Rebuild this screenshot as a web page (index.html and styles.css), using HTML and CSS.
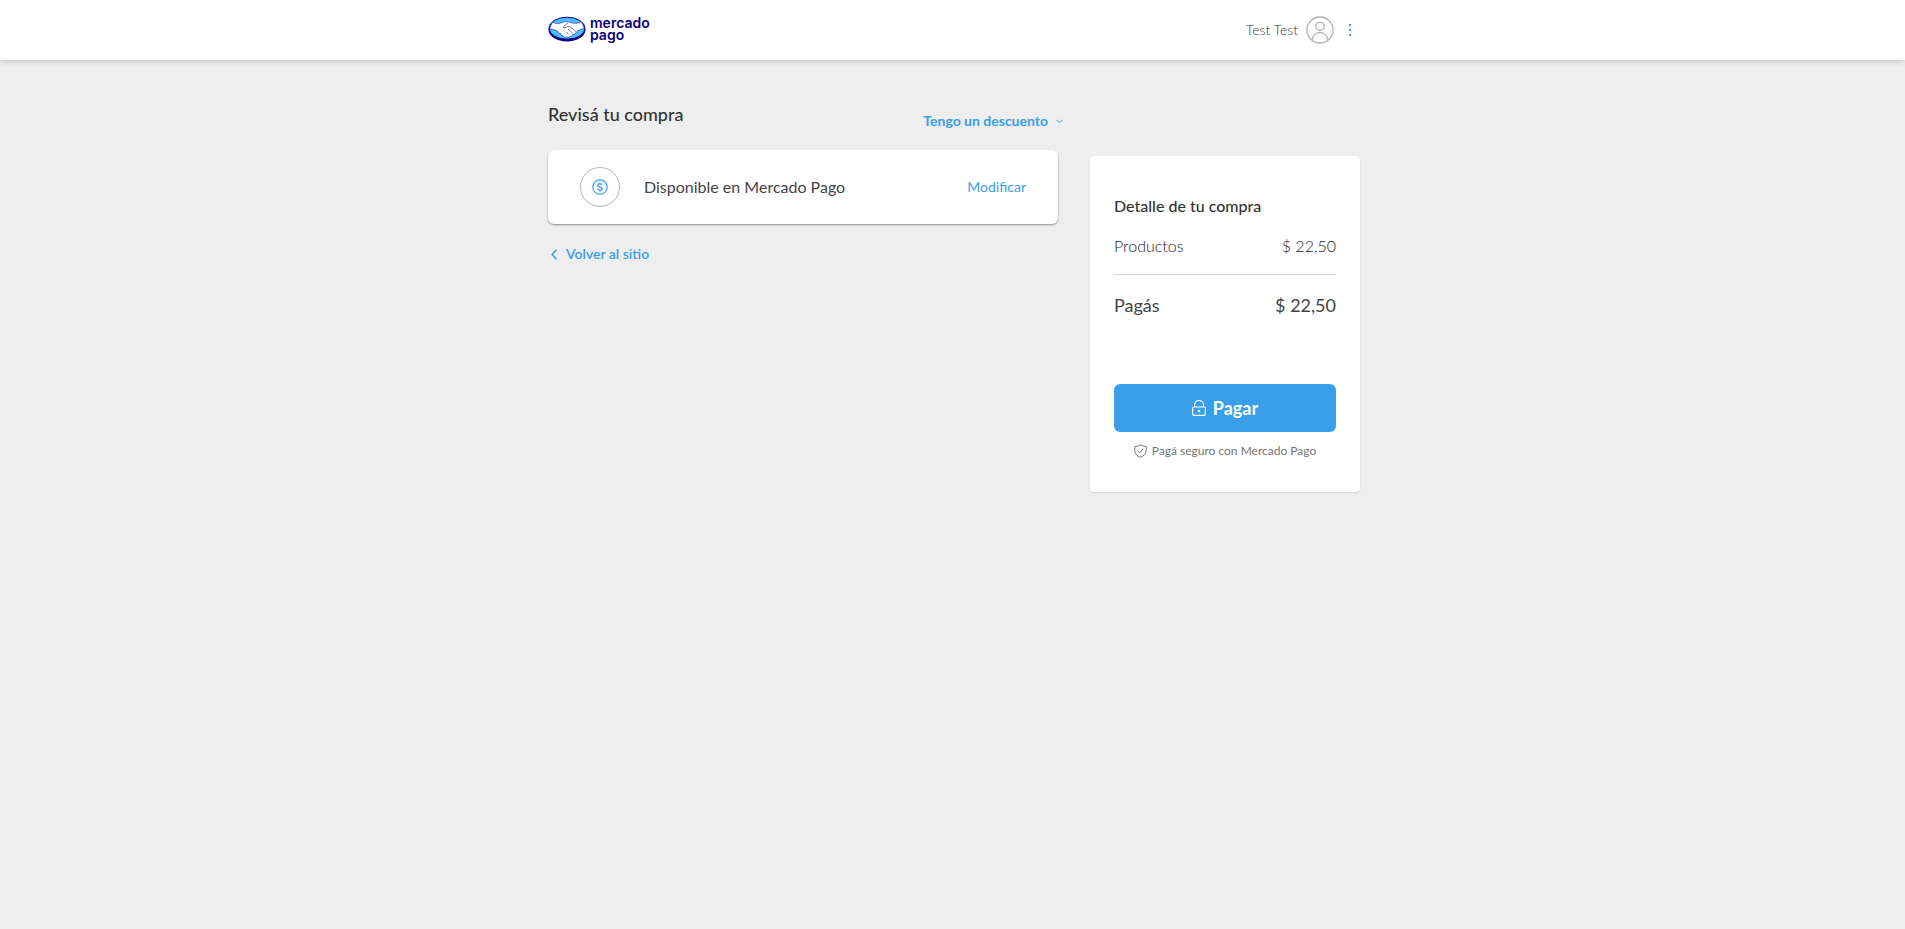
FILE: index.html
```html
<!DOCTYPE html>
<html lang="es">
<head>
<meta charset="utf-8">
<title>Revisá tu compra</title>
<link rel="stylesheet" href="styles.css">
</head>
<body>
<header class="header">
  <div class="container header-inner">
    <a class="logo" href="#" aria-label="mercado pago">
      <svg class="logo-mark" width="38" height="26" viewBox="0 0 38 26" aria-hidden="true">
        <ellipse cx="19" cy="13.8" rx="18.5" ry="11.7" fill="#0a0080"/>
        <ellipse cx="19" cy="12.2" rx="18" ry="11" fill="#4dbdff" stroke="#0a0080"/>
        <path d="M4.500 6c3.500 2 6.500 2 9.500.6 2.500-1.200 4.500-1 6.500-.6 4.500 1.600 9 2 13-.2l2.800 6.600c-3.500.6-6.500 2-8.500 4.200-.6 1.700-2 2-3 1.800-.6 1.700-2 2.200-3 1.800-1 1.600-2.400 1.500-3.400.6-1.300 1.100-2.900.3-3.200-1.100-2.200.2-3-1.200-2.600-2.400-2 .2-3.200-.8-3-2.200-2.700-1.100-5.100-1.900-8-2.300z" fill="#fff" stroke="#0a0080" stroke-width=".5"/>
        <path d="M20 7.500c-2.200.2-3.500 2.200-5 3.700.8 1.200 2.800.8 4.600-1 2.600 0 6.200 3 8.500 5.500M20 13.200l4.500 4M17.800 15.500l3 3" fill="none" stroke="#0a0080" stroke-width=".5"/>
      </svg>
      <span class="logo-text">mercado<br>pago</span>
    </a>
    <div class="user">
      <span class="user-name">Test Test</span>
      <svg class="avatar" width="28" height="28" viewBox="0 0 28 28" fill="none" stroke="#b3b3b3" stroke-width="1.300" aria-hidden="true">
        <circle cx="14" cy="14" r="13"/><circle cx="14" cy="10.300" r="4.200"/>
        <path d="M6.300 24.300v-.6c0-4.200 3.300-7 7.700-7s7.700 2.800 7.700 7v.6"/>
      </svg>
      <button class="menu" type="button" aria-label="Más opciones">
        <svg width="2" height="12" viewBox="0 0 2 12" fill="#389fe8" aria-hidden="true"><path d="M0 0h2v2H0zM0 5h2v2H0zM0 10h2v2H0z"/></svg>
      </button>
    </div>
  </div>
</header>
<main class="container content">
  <section class="review">
    <div class="review-head">
      <h1 class="title">Revisá tu compra</h1>
      <button class="discount" type="button">Tengo un descuento
        <svg width="7" height="5" viewBox="0 0 7 5" fill="none" stroke="#389fe8" aria-hidden="true"><path d="M.5.800l3 3 3-3"/></svg>
      </button>
    </div>
    <div class="method">
      <span class="method-icon">
        <svg width="16" height="16" viewBox="0 0 16 16" fill="none" stroke="#389fe8" aria-hidden="true">
          <circle cx="8" cy="8" r="7.200" stroke-width="1.200"/>
          <path d="M10.200 6.200c-.2-.8-1-1.300-2.200-1.300-1.300 0-2.200.6-2.200 1.500 0 1 .9 1.300 2.200 1.600s2.300.6 2.300 1.600c0 .9-.9 1.500-2.300 1.500-1.300 0-2.200-.5-2.400-1.400M8 3.300v1.600M8 11.100v1.600" stroke-width="1.300"/>
        </svg>
      </span>
      <span class="method-name">Disponible en Mercado Pago</span>
      <a class="modify" href="#">Modificar</a>
    </div>
    <a class="back" href="#">
      <svg width="6" height="11" viewBox="0 0 6 11" fill="none" stroke="#389fe8" stroke-width="1.500" aria-hidden="true"><path d="M5.400.700L1 5.500l4.400 4.800"/></svg>
      Volver al sitio
    </a>
  </section>
  <aside class="summary">
    <h2 class="summary-title">Detalle de tu compra</h2>
    <div class="row"><span>Productos</span><span>$ 22,50</span></div>
    <div class="row total"><span>Pagás</span><span>$ 22,50</span></div>
    <button class="pay" type="button">
      <svg width="14" height="16" viewBox="0 0 14 16" fill="none" stroke="#fff" stroke-width="1.200" aria-hidden="true"><rect x=".6" y="7" width="12.800" height="8.400" rx="1.600"/><path d="M2.500 7V5a4.500 4.500 0 0 1 9 0v2"/><rect x="6.500" y="10.500" width="1" height="1"/></svg>
      Pagar
    </button>
    <p class="secure">
      <svg width="13" height="14" viewBox="0 0 13 14" fill="none" stroke="#737373" aria-hidden="true"><path d="M6.500.800c1.700 1.100 3.600 1.700 5.700 1.800v4c0 3-2.100 5.400-5.700 6.600C2.900 12 .8 9.600.8 6.600v-4C2.900 2.500 4.800 1.900 6.500.800z"/><path d="M3.900 7l1.900 1.800 3.300-4"/></svg>
      Pagá seguro con Mercado Pago
    </p>
  </aside>
</main>
</body>
</html>
```
FILE: styles.css
```css
* { box-sizing: border-box; }
body {
  margin: 0;
  min-height: 100vh;
  background: #eee;
  color: #333;
  font-family: Lato, "Open Sans", sans-serif;
  font-size: 16px;
  line-height: 24px;
}
a { color: #389fe8; text-decoration: none; }
button { border: 0; padding: 0; background: none; font: inherit; cursor: pointer; }
svg { flex: none; }
h1, h2, p { margin: 0; }
.container { max-width: 815px; margin: 0 auto; padding-left: 3px; }
.header { background: #fff; box-shadow: 0 1px 6px rgba(0, 0, 0, .2); }
.header-inner { display: flex; align-items: center; justify-content: space-between; height: 60px; }
.logo { display: flex; align-items: center; gap: 4px; padding-bottom: 2px; }
.logo-text { color: #0a0080; font-family: Inter, sans-serif; font-size: 14px; font-weight: 600; line-height: 12px; }
.user { display: flex; align-items: center; }
.user-name { color: #333; font-size: 14px; font-weight: 300; margin-right: 8px; }
.menu { display: flex; padding: 6px 9px 6px 15px; }
.content { display: flex; align-items: flex-start; gap: 32px; }
.review { flex: 1; }
.review-head { display: flex; justify-content: space-between; height: 90px; padding-top: 42px; margin-right: -5px; }
.title { font-size: 18px; font-weight: 500; }
.discount { display: flex; align-items: center; gap: 8px; height: 38px; color: #389fe8; font-size: 14px; font-weight: 700; }
.method { display: flex; align-items: center; padding: 17px 32px; background: #fff; border-radius: 6px; box-shadow: 0 1px 2px rgba(0, 0, 0, .4); }
.method-icon { display: flex; align-items: center; justify-content: center; width: 40px; height: 40px; border: 1px solid #b3b3b3; border-radius: 50%; }
.method-name { flex: 1; padding-left: 24px; color: #444; }
.modify { font-size: 14px; }
.back { display: inline-flex; align-items: center; gap: 9px; margin-top: 18px; padding-left: 3px; font-size: 14px; font-weight: 600; }
.summary { width: 270px; margin-top: 96px; padding: 38px 24px 29px; background: #fff; border-radius: 4px; box-shadow: 0 1px 2px rgba(0, 0, 0, .1); }
.summary-title { font-size: 16px; font-weight: 500; }
.row { display: flex; justify-content: space-between; margin-top: 16px; color: #222; font-weight: 300; }
.total { margin-top: 16px; padding-top: 18px; border-top: 1px solid #d9d9d9; color: #444; font-size: 18px; font-weight: 400; }
.pay { display: flex; align-items: center; justify-content: center; gap: 7px; width: 100%; height: 48px; margin-top: 67px; border-radius: 6px; background: #389fe8; color: #fff; font-size: 18px; font-weight: 700; }
.secure { display: flex; align-items: center; justify-content: center; gap: 5px; margin-top: 7px; color: #737373; font-size: 12px; font-weight: 400; }
```
